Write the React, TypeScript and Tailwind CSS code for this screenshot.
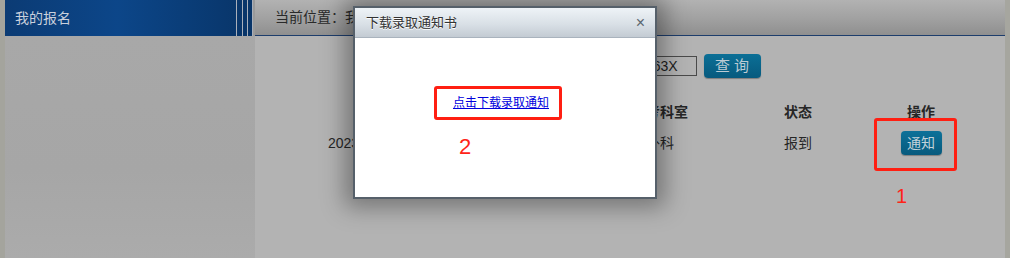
import React from "react";

const font = { fontFamily: '"Liberation Sans", "Noto Sans CJK SC", sans-serif' };

const columns = "grid grid-cols-[246px_74px_140px_136px_110px]";

function Sidebar() {
  return (
    <div className="w-[250px] shrink-0 flex flex-col bg-[#a6a6a6]">
      <div className="h-[36px] flex bg-[linear-gradient(90deg,#0b3b74_0%,#0c4689_45%,#083467_100%)]">
        <div className="flex-1 flex items-center pl-[10px] text-[14px] text-[#c9d0dc]">我的报名</div>
        <div className="flex h-full">
          <div className="w-px bg-[#a9b0bb]" />
          <div className="w-[5px]" />
          <div className="w-px bg-[#a9b0bb]" />
          <div className="w-[4px]" />
          <div className="w-px bg-[#a9b0bb]" />
          <div className="w-[4px]" />
          <div className="w-px bg-[#a9b0bb]" />
          <div className="w-[2px] bg-[#9a9a9a]" />
        </div>
      </div>
      <div className="flex-1 bg-[linear-gradient(180deg,#a8a8a8_0%,#a6a6a6_60%,#ababab_100%)]" />
    </div>
  );
}

function Main() {
  return (
    <div className="flex-1 flex flex-col bg-[#b3b3b3]">
      <div className="h-[35px] flex items-center pl-[20px] text-[14px] text-[#2a2a2a] bg-[linear-gradient(180deg,#b2b2b2_0%,#a2a2a2_50%,#8f8f8f_100%)]">
        当前位置：我的报名
      </div>
      <div className="h-px bg-[#1d3d6c]" />
      <div className="flex items-center h-[24px] mt-[18px] pl-[203px] gap-[7px]">
        <span className="w-[65px] text-[13px] text-[#2a2a2a]">身份证号：</span>
        <div className="w-[167px] h-[20px] border border-[#4a4a4a] flex items-center pl-[5px] text-[14px] text-[#1e1e1e] bg-[#b3b3b3]">
          41018219950101563X
        </div>
        <button className="w-[57px] h-[24px] rounded-[4px] bg-[linear-gradient(180deg,#0b6f96_0%,#075a7e_100%)] text-[15px] text-[#bccbd4] tracking-[4px] pl-[3px] shadow-[0_1px_1px_rgba(0,0,0,0.3)]">
          查询
        </button>
      </div>
      <div className={`${columns} ml-[15px] mt-[24px] h-[18px] items-center text-[14px] font-bold text-[#262626] text-center`}>
        <div>报名时间</div>
        <div>姓名</div>
        <div>报考科室</div>
        <div>状态</div>
        <div>操作</div>
      </div>
      <div className={`${columns} ml-[15px] mt-[10px] h-[26px] items-center text-[14px] text-[#262626] text-center`}>
        <div>2023-07-15 10:23:45</div>
        <div>张三</div>
        <div>外科</div>
        <div>报到</div>
        <div className="flex justify-center">
          <button className="w-[41px] h-[24px] rounded-[4px] bg-[linear-gradient(180deg,#0d7199_0%,#075a7d_100%)] text-[14px] text-[#c2d2da] shadow-[0_1px_1px_rgba(0,0,0,0.3)]">
            通知
          </button>
        </div>
      </div>
    </div>
  );
}

function Dialog() {
  return (
    <div className="absolute left-[353px] top-[6px] w-[304px] h-[193px] border-2 border-[#56606a] bg-white flex flex-col shadow-[0_0_22px_8px_rgba(0,0,0,0.35)]">
      <div className="h-[30px] flex items-center justify-between pl-[11px] pr-[10px] border-b border-[#a9b3bd] bg-[linear-gradient(180deg,#eef3f7_0%,#d9e0e6_55%,#c3cbd3_100%)]">
        <span className="text-[13px] text-[#333] [text-shadow:0_1px_0_#fff]">下载录取通知书</span>
        <span className="text-[16px] leading-none text-[#5b6670]">×</span>
      </div>
      <div className="flex-1 flex flex-col items-center pt-[56px]">
        <a href="#" className="text-[12px] text-[#0000dd] underline mr-[8px]">
          点击下载录取通知
        </a>
      </div>
    </div>
  );
}

export default function App() {
  return (
    <div className="relative w-[1010px] h-[258px] overflow-hidden flex bg-[#a5a59e]" style={font}>
      <div className="w-[5px] shrink-0 bg-[#a4a49d]" />
      <Sidebar />
      <Main />
      <div className="w-[5px] shrink-0 bg-[#a6a69f]" />
      <Dialog />
      <div className="absolute left-[434px] top-[86px] w-[128px] h-[34px] border-[3px] border-[#ff1f12] rounded-[3px]" />
      <div className="absolute left-[459px] top-[136px] text-[22px] leading-none text-[#ff2418]">2</div>
      <div className="absolute left-[874px] top-[118px] w-[83px] h-[53px] border-[3px] border-[#ff1f12] rounded-[3px]" />
      <div className="absolute left-[896px] top-[186px] text-[20px] leading-none text-[#ff2418]">1</div>
    </div>
  );
}
